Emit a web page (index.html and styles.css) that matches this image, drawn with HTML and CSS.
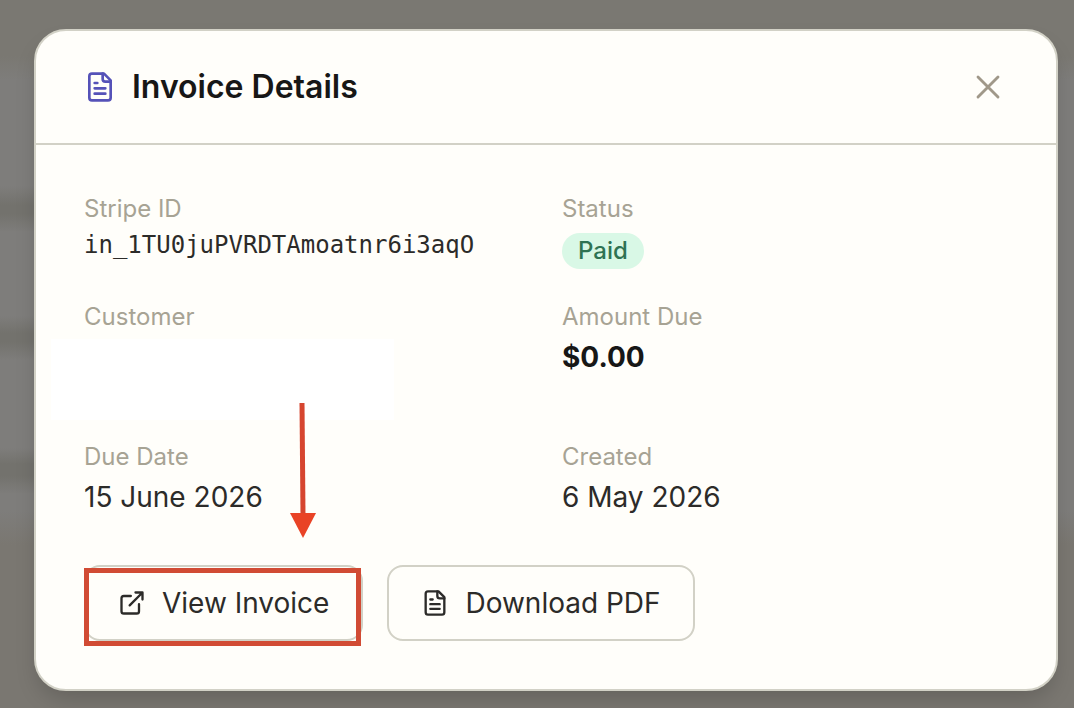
FILE: index.html
```
<!DOCTYPE html>
<html lang="en">
<head>
    <meta charset="UTF-8">
    <meta name="viewport" content="width=device-width, initial-scale=1.0">
    <title>Invoice Details</title>
    <link rel="stylesheet" href="styles.css">
</head>
<body>
    <div class="backdrop">
        <div class="modal" role="dialog" aria-labelledby="modal-title">
            <header class="modal-header">
                <svg class="title-icon" viewBox="0 0 24 24">
                    <path d="M15 2H6a2 2 0 0 0-2 2v16a2 2 0 0 0 2 2h12a2 2 0 0 0 2-2V7Z"/>
                    <path d="M14 2v4a2 2 0 0 0 2 2h4"/>
                    <path d="M10 9H8M16 13H8M16 17H8"/>
                </svg>
                <h1 id="modal-title">Invoice Details</h1>
                <button class="close-btn" type="button" aria-label="Close">
                    <svg viewBox="0 0 24 24"><path d="M18 6 6 18M6 6l12 12"/></svg>
                </button>
            </header>

            <div class="modal-body">
                <dl class="details">
                    <div class="detail">
                        <dt>Stripe ID</dt>
                        <dd class="mono">in_1TU0juPVRDTAmoatnr6i3aqO</dd>
                    </div>
                    <div class="detail">
                        <dt>Status</dt>
                        <dd class="status"><span class="badge">Paid</span></dd>
                    </div>
                    <div class="detail">
                        <dt>Customer</dt>
                        <dd class="customer"><span class="redacted"></span></dd>
                    </div>
                    <div class="detail">
                        <dt>Amount Due</dt>
                        <dd class="amount">$0.00</dd>
                    </div>
                    <div class="detail">
                        <dt>Due Date</dt>
                        <dd>15 June 2026</dd>
                    </div>
                    <div class="detail">
                        <dt>Created</dt>
                        <dd>6 May 2026</dd>
                    </div>
                </dl>

                <div class="actions">
                    <div class="highlighted">
                        <button class="btn" type="button">
                            <svg viewBox="0 0 24 24">
                                <path d="M15 3h6v6M10 14 21 3"/>
                                <path d="M18 13v6a2 2 0 0 1-2 2H5a2 2 0 0 1-2-2V8a2 2 0 0 1 2-2h6"/>
                            </svg>
                            View Invoice
                        </button>
                        <!-- Callout box and arrow over the button -->
                        <span class="callout"></span>
                        <svg class="arrow" viewBox="0 0 26 136">
                            <path class="arrow-line" d="M12 1l1 112"/>
                            <path class="arrow-head" d="M0 111h26L13 136z"/>
                        </svg>
                    </div>
                    <button class="btn" type="button">
                        <svg viewBox="0 0 24 24">
                            <path d="M15 2H6a2 2 0 0 0-2 2v16a2 2 0 0 0 2 2h12a2 2 0 0 0 2-2V7Z"/>
                            <path d="M14 2v4a2 2 0 0 0 2 2h4"/>
                            <path d="M10 9H8M16 13H8M16 17H8"/>
                        </svg>
                        Download PDF
                    </button>
                </div>
            </div>
        </div>
    </div>
</body>
</html>
```

FILE: styles.css
```
* {
    box-sizing: border-box;
}

body {
    margin: 0;
    font-family: Inter, "Liberation Sans", sans-serif;
    font-size: 28px;
    line-height: 40px;
    color: #2c2b29;
}

/* Dimmed, blurred page behind the dialog */
.backdrop {
    min-height: 100vh;
    padding: 29px 16px 17px 34px;
    background:
        linear-gradient(transparent 186px, #73726d 205px, #73726d 214px, transparent 232px,
            transparent 316px, #73726d 333px, #73726d 342px, transparent 360px,
            transparent 448px, #73726d 464px, #73726d 476px, transparent 494px)
            left / 50% 100% no-repeat,
        linear-gradient(#7a7872 56px, #7e7d7b 80px, #7e7d7b 510px, #7a7771 545px);
}

.modal {
    background-color: #fffefa;
    border: 2px solid #d2d1c6;
    border-radius: 32px;
    box-shadow: 0 12px 24px -6px rgba(0, 0, 0, 0.2);
}

svg {
    fill: none;
    stroke: currentColor;
    stroke-width: 2;
    stroke-linecap: round;
    stroke-linejoin: round;
}

.modal-header {
    display: flex;
    align-items: center;
    gap: 16px;
    padding: 32px 48px;
    border-bottom: 2px solid #d2d1c6;
}

.title-icon {
    width: 32px;
    height: 32px;
    color: #5552b8;
}

h1 {
    margin: 0;
    font-size: 32px;
    font-weight: 600;
    line-height: 48px;
    color: #171716;
}

.close-btn {
    display: flex;
    margin-left: auto;
    padding: 0;
    background: none;
    border: none;
    color: #a09889;
    cursor: pointer;
}

.close-btn svg {
    width: 40px;
    height: 40px;
    stroke-width: 1.7;
}

.modal-body {
    padding: 48px;
}

.details {
    display: grid;
    grid-template-columns: 1fr 1fr;
    gap: 32px;
    margin: 0;
}

dt {
    margin-bottom: 4px;
    font-size: 24px;
    line-height: 32px;
    color: #a7a394;
}

dd {
    margin: 0;
}

.mono {
    font-family: "DejaVu Sans Mono", monospace;
    font-size: 24px;
    line-height: 32px;
}

.status {
    display: flex;
    align-items: flex-end;
    height: 40px;
}

.badge {
    padding: 2px 16px;
    border-radius: 18px;
    background-color: #d9f8e6;
    color: #2f7353;
    font-size: 24px;
    font-weight: 500;
    line-height: 32px;
}

.customer {
    position: relative;
    height: 72px;
}

.redacted {
    position: absolute;
    top: 2px;
    left: -33px;
    width: 343px;
    height: 81px;
    background-color: #fff;
}

.amount {
    font-weight: 700;
    color: #171716;
}

.actions {
    display: flex;
    gap: 24px;
    margin-top: 48px;
}

.btn {
    display: flex;
    align-items: center;
    gap: 16px;
    padding: 16px 32px;
    background-color: #fffefa;
    border: 2px solid #d2d1c6;
    border-radius: 16px;
    color: #2c2b29;
    font: inherit;
    cursor: pointer;
}

.btn svg {
    width: 28px;
    height: 28px;
}

.highlighted {
    position: relative;
}

.callout {
    position: absolute;
    inset: 3px 2px -5px 0;
    border: 5px solid #d14b34;
    pointer-events: none;
}

.arrow {
    position: absolute;
    left: 206px;
    bottom: 103px;
    width: 26px;
    height: 136px;
    pointer-events: none;
}

.arrow-line {
    stroke: #d6452f;
    stroke-width: 5;
    stroke-linecap: butt;
}

.arrow-head {
    fill: #e94326;
    stroke: none;
}
```
